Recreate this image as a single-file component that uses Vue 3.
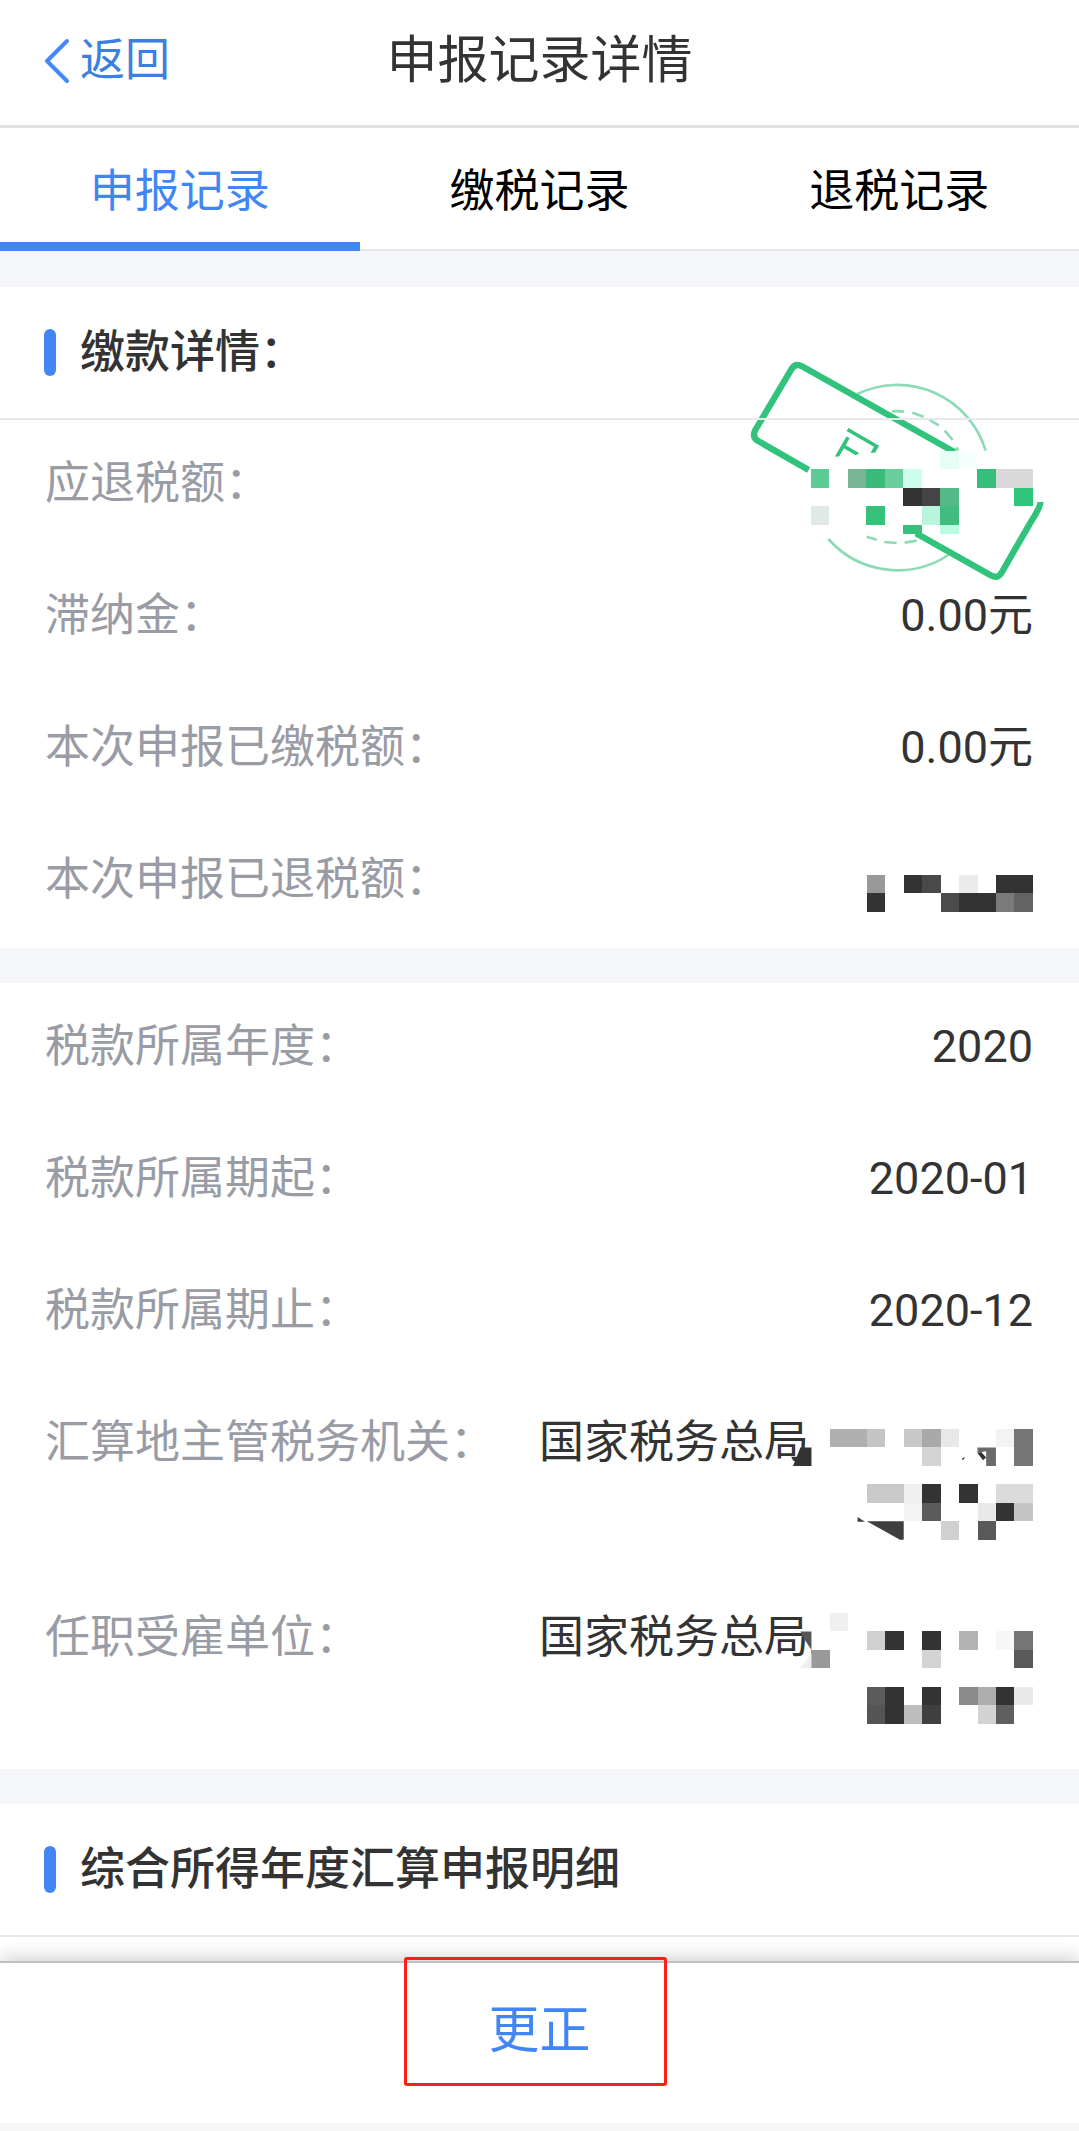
<template>
  <div class="page">
    <header class="nav-bar">
      <button class="back-btn" type="button">
        <svg class="back-icon" viewBox="0 0 26 46" aria-hidden="true">
          <path d="M23 3L3 23L23 43" />
        </svg>
        <span>返回</span>
      </button>
      <h1 class="nav-title">申报记录详情</h1>
    </header>

    <nav class="tabs">
      <button
        v-for="(tab, index) in tabs"
        :key="tab"
        type="button"
        :class="['tab', { active: index === activeTab }]"
        @click="activeTab = index"
      >
        {{ tab }}
      </button>
    </nav>

    <main class="content">
      <section class="card">
        <h2 class="card-title">缴款详情：</h2>
        <!-- Stamp over the first row -->
        <svg class="stamp" viewBox="90 51 885 681" aria-hidden="true">
          <defs>
            <clipPath id="stamp-clip">
              <path d="M330 240H500V338H420L400 350H330Z" />
            </clipPath>
          </defs>
          <g class="stamp-ring">
            <path d="M412 162A277 277 0 0 1 797 332" />
            <path d="M325 597A277 277 0 0 0 685 645" />
            <path d="M516 214Q534 212 552 215M577 218L611 230M628 239L656 256M674 272L698 300M709 322L714 332" />
            <path d="M440 590L470 599M493 606L530 609M554 608L590 602" />
          </g>
          <g class="stamp-frame">
            <path d="M704 337L246 79Q226 68 214 88L106 270Q94 292 116 304L266 390" />
            <path d="M588 580L812 706Q834 718 846 696L930 550Q962 500 961 486" />
          </g>
          <g clip-path="url(#stamp-clip)">
            <text class="stamp-text" transform="translate(317 355) rotate(30)">已</text>
          </g>
          <g transform="translate(273 332) scale(5.54)" shape-rendering="crispEdges">
            <rect
              v-for="([col, row, color, height], i) in stampCells"
              :key="i"
              :x="col * 10"
              :y="row * 10"
              width="10"
              :height="height || 10"
              :fill="color"
            />
          </g>
        </svg>
        <dl class="rows">
          <div v-for="item in payRows" :key="item.label" class="row">
            <dt>{{ item.label }}：</dt>
            <dd v-if="item.value">{{ item.value }}</dd>
            <dd v-else-if="item.cells">
              <svg class="mask" viewBox="0 0 240 63" aria-hidden="true">
                <g transform="translate(0 27) scale(1.845)" shape-rendering="crispEdges">
                  <rect
                    v-for="([col, row, color], i) in item.cells"
                    :key="i"
                    :x="col * 10"
                    :y="row * 10"
                    width="10"
                    height="10"
                    :fill="color"
                  />
                </g>
              </svg>
            </dd>
          </div>
        </dl>
      </section>

      <section class="card">
        <dl class="rows">
          <div v-for="item in taxRows" :key="item.label" class="row">
            <dt>{{ item.label }}：</dt>
            <dd :class="{ org: item.cells }">
              {{ item.value }}
              <svg v-if="item.cells" class="mask org-mask" viewBox="0 0 240 126" aria-hidden="true">
                <g :transform="`translate(0 ${item.top}) scale(1.845)`">
                  <rect
                    v-for="([col, row, color], i) in item.cells"
                    :key="i"
                    :x="col * 10"
                    :y="row * 10"
                    width="10"
                    height="10"
                    :fill="color"
                    shape-rendering="crispEdges"
                  />
                  <path v-for="shape in item.shapes" :key="shape.d" :d="shape.d" :fill="shape.color" />
                </g>
              </svg>
            </dd>
          </div>
        </dl>
      </section>

      <section class="card">
        <h2 class="card-title">综合所得年度汇算申报明细</h2>
      </section>
    </main>

    <footer class="footer">
      <button class="correct-btn" type="button">更正</button>
      <span class="marker"></span>
    </footer>
  </div>
</template>

<script setup>
import { ref } from 'vue';

const tabs = ['申报记录', '缴税记录', '退税记录'];
const activeTab = ref(0);

// Mosaic cells: [column, row, color, height]
const stampCells = [
  [7, 0, '#e5fff7'], [8, 0, '#f5fffb'],
  [0, 1, '#5bca94'], [2, 1, '#79b597'], [3, 1, '#3abb7a'], [4, 1, '#6acd9c'], [5, 1, '#ccfdec'],
  [9, 1, '#37be7b'], [10, 1, '#dad9da'], [11, 1, '#dad9da'],
  [5, 2, '#333333'], [6, 2, '#454345'], [7, 2, '#52b987'], [11, 2, '#30c47b'],
  [0, 3, '#dfeae5'], [3, 3, '#34c27b'], [6, 3, '#b9f4dc'], [7, 3, '#3fbc7e'],
  [5, 4, '#34c27b', 5], [7, 4, '#bbfbdf', 5],
];

const payRows = [
  { label: '应退税额' },
  { label: '滞纳金', value: '0.00元' },
  { label: '本次申报已缴税额', value: '0.00元' },
  {
    label: '本次申报已退税额',
    cells: [
      [4, 0, '#999999'], [6, 0, '#333333'], [7, 0, '#494949'], [9, 0, '#ebebeb'],
      [11, 0, '#333333'], [12, 0, '#333333'],
      [4, 1, '#333333'], [8, 1, '#4b4b4b'], [9, 1, '#333333'], [10, 1, '#333333'],
      [11, 1, '#7a7a7a'], [12, 1, '#646464'],
    ],
  },
];

const taxRows = [
  { label: '税款所属年度', value: '2020' },
  { label: '税款所属期起', value: '2020-01' },
  { label: '税款所属期止', value: '2020-12' },
  {
    label: '汇算地主管税务机关',
    value: '国家税务总局',
    top: 18,
    cells: [
      [2, 0, '#b0b0b0'], [3, 0, '#b0b0b0'], [4, 0, '#c4c4c4'], [6, 0, '#c8c8c8'],
      [7, 0, '#a9a9a9'], [8, 0, '#e8e8e8'], [11, 0, '#f3f3f3'], [12, 0, '#757575'],
      [7, 1, '#d4d4d4'], [12, 1, '#757575'],
      [4, 3, '#c9c9c9'], [5, 3, '#c9c9c9'], [6, 3, '#f0f0f0'], [7, 3, '#333333'],
      [9, 3, '#333333'], [11, 3, '#dbdbdb'], [12, 3, '#dbdbdb'],
      [6, 4, '#f3f3f3'], [7, 4, '#5c5c5c'], [10, 4, '#e9e9e9'], [11, 4, '#333333'],
      [12, 4, '#c5c5c5'],
      [8, 5, '#d0d0d0'], [10, 5, '#595959'],
    ],
    shapes: [
      { d: 'M0 20L4 10H10V20ZM-1 15H2V17H0Z', color: '#333333' },
      { d: 'M100 10H110V20H104.700V12L100 13Z', color: '#6a6a6a' },
      { d: 'M100 13L102 12.500L104.700 15.500L103 17Z', color: '#333333' },
      { d: 'M91.500 16L93.500 15.200L92 17Z', color: '#333333' },
      { d: 'M40 50H60V60H58ZM35 47.700L39 50.300H35Z', color: '#3e3e3e' },
    ],
  },
  {
    label: '任职受雇单位',
    value: '国家税务总局',
    top: 7,
    cells: [
      [2, 0, '#efefef'],
      [4, 1, '#d0d0d0'], [5, 1, '#333333'], [7, 1, '#333333'], [9, 1, '#b3b3b3'],
      [11, 1, '#f7f7f7'], [12, 1, '#757575'],
      [1, 2, '#999999'], [7, 2, '#d4d4d4'], [12, 2, '#595959'],
      [4, 4, '#5c5c5c'], [5, 4, '#333333'], [7, 4, '#333333'], [9, 4, '#8a8a8a'],
      [10, 4, '#adadad'], [11, 4, '#333333'], [12, 4, '#e9e9e9'],
      [4, 5, '#555555'], [5, 5, '#333333'], [6, 5, '#bebebe'], [7, 5, '#404040'],
      [10, 5, '#d3d3d3'], [11, 5, '#5f5f5f'],
    ],
    shapes: [
      { d: 'M4 10H10V20L6 14Z', color: '#555555' },
      { d: 'M4 30L10 22V30Z', color: '#eeeeee' },
    ],
  },
];
</script>

<style>
body {
  margin: 0;
  background: #f7f7f7;
}
</style>

<style scoped>
.page {
  min-height: 100vh;
  box-sizing: border-box;
  padding-bottom: 8px;
  display: flex;
  flex-direction: column;
  font-family: Roboto, "Noto Sans CJK SC", sans-serif;
  font-size: 45px;
  line-height: 63px;
  color: #333333;
}

button {
  border: none;
  background: transparent;
  font: inherit;
  padding: 0;
  cursor: pointer;
}

/* Header */
.nav-bar {
  display: grid;
  grid-template-columns: 1fr auto 1fr;
  align-items: center;
  padding: 29px 44px 33px;
  background: #ffffff;
  border-bottom: 3px solid #e1e3e3;
}

.back-btn {
  display: flex;
  align-items: center;
  gap: 10px;
  color: #3b80de;
}

.back-icon {
  width: 26px;
  height: 46px;
  fill: none;
  stroke: #4487f6;
  stroke-width: 4;
  stroke-linecap: round;
  stroke-linejoin: round;
}

.nav-title {
  margin: 0;
  font-size: 51px;
  font-weight: 400;
}

/* Tabs */
.tabs {
  display: flex;
  background: #ffffff;
  box-shadow: inset 0 -2px #e4e4e4;
}

.tab {
  flex: 1;
  padding: 32px 0 19px;
  border-bottom: 9px solid transparent;
  color: #000000;
}

.tab.active {
  color: #4286f5;
  border-bottom-color: #4286f5;
}

/* Content */
.content {
  flex: 1;
  display: flex;
  flex-direction: column;
  gap: 35px;
  padding-top: 36px;
  background: #f4f6fa;
}

.card {
  position: relative;
  background: #ffffff;
}

.card:last-child {
  flex: 1;
}

.card-title {
  position: relative;
  z-index: 2;
  display: flex;
  align-items: center;
  gap: 24px;
  margin: 0;
  padding: 34px 44px;
  border-bottom: 2px solid #e8e8e8;
  font-size: 45px;
  font-weight: 500;
}

.card-title::before {
  content: "";
  width: 12px;
  height: 47px;
  border-radius: 6px;
  background: #4286f5;
}

.rows {
  margin: 0;
}

.row {
  display: flex;
  justify-content: space-between;
  padding: 32px 46px 37px 45px;
}

dt {
  color: #999ca5;
}

dd {
  position: relative;
  margin: 0;
  text-align: right;
}

.mask {
  display: block;
  width: 240px;
  overflow: visible;
}

.org {
  width: 494px;
  min-height: 126px;
  text-align: left;
}

.org-mask {
  position: absolute;
  top: 0;
  right: 0;
}

/* Stamp */
.stamp {
  position: absolute;
  z-index: 1;
  top: 70px;
  right: 34px;
  width: 295px;
  height: 227px;
}

.stamp-ring {
  fill: none;
  stroke: #8bdbb5;
  stroke-width: 8;
}

.stamp-frame {
  fill: none;
  stroke: #31c37c;
  stroke-width: 19;
}

.stamp-text {
  font-size: 145px;
  fill: #31c37c;
}

/* Footer */
.footer {
  position: relative;
  z-index: 3;
  display: flex;
  background: #ffffff;
  border-top: 2px solid #bfc0c3;
  box-shadow: 0 -3px 18px rgba(0, 0, 0, 0.2);
  clip-path: inset(-24px 0 0 0);
}

.correct-btn {
  flex: 1;
  padding: 36px 0 61px;
  font-size: 51px;
  color: #4286f5;
}

/* Red frame round the action */
.marker {
  position: absolute;
  top: -6px;
  left: calc(50% - 136px);
  width: 257px;
  height: 123px;
  border: 3px solid #fb2015;
  border-radius: 3px;
  pointer-events: none;
}
</style>
